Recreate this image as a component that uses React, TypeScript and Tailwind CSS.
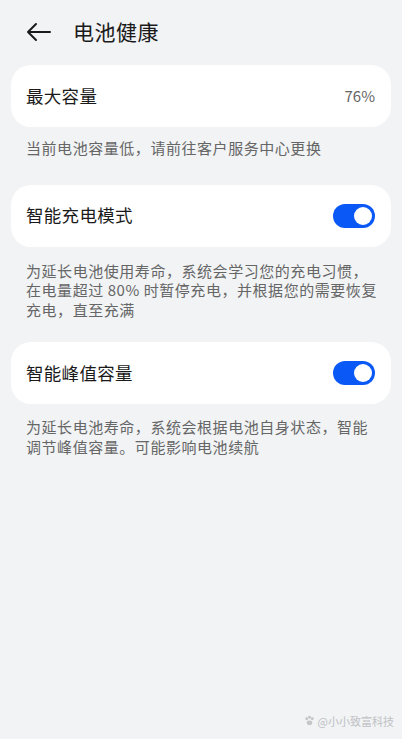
const Toggle = () => (
  <div className="flex h-[24px] w-[42px] items-center justify-end rounded-full bg-[#0a59f7] pr-[3px]">
    <div className="h-[18px] w-[18px] rounded-full bg-white" />
  </div>
);

const Card = ({ title, right }: { title: string; right: React.ReactNode }) => (
  <div className="flex h-[62px] items-center justify-between rounded-[20px] bg-white pl-[15px] pr-[16px]">
    <span className="text-[17.5px] tracking-[0.3px] text-[#1a1a1a]">{title}</span>
    {right}
  </div>
);

const Desc = ({ lines, className }: { lines: string[]; className: string }) => (
  <div className={`px-[15px] text-[15px] tracking-[0.55px] text-[#666] ${className}`}>
    {lines.map((l) => (
      <div key={l} className="whitespace-nowrap">
        {l}
      </div>
    ))}
  </div>
);

const App = () => {
  return (
    <div
      className="relative min-h-[739px] w-full bg-[#f1f3f5]"
      style={{ fontFamily: '"Noto Sans CJK SC", "Noto Sans", sans-serif' }}
    >
      <div className="flex h-[65px] items-center pb-[1px] pl-[26px]">
        <svg width="25" height="20" viewBox="0 0 25 20" fill="none" stroke="#1a1a1a" strokeWidth="2" strokeLinecap="round" strokeLinejoin="round">
          <path d="M24 10H2M10 2L2 10l8 8" />
        </svg>
        <h1 className="ml-[22px] text-[21px] tracking-[0.5px] text-[#1a1a1a]">电池健康</h1>
      </div>

      <div className="px-[11px]">
        <Card title="最大容量" right={<span className="text-[15px] text-[#666]">76%</span>} />
        <Desc className="mt-[11px] leading-[19.5px]" lines={["当前电池容量低，请前往客户服务中心更换"]} />

        <div className="mt-[27px]">
          <Card title="智能充电模式" right={<Toggle />} />
        </div>
        <Desc
          className="mt-[14px] leading-[19.5px]"
          lines={[
            "为延长电池使用寿命，系统会学习您的充电习惯，",
            "在电量超过 80% 时暂停充电，并根据您的需要恢复",
            "充电，直至充满",
          ]}
        />

        <div className="mt-[23px]">
          <Card title="智能峰值容量" right={<Toggle />} />
        </div>
        <Desc
          className="mt-[13px] leading-[20px]"
          lines={["为延长电池寿命，系统会根据电池自身状态，智能", "调节峰值容量。可能影响电池续航"]}
        />
      </div>

      <div className="absolute bottom-[10px] right-[8px] flex items-center gap-[3px] text-[11px] text-[#bfc1c4]">
        <svg width="11" height="11" viewBox="0 0 12 12" fill="#c4c6c9">
          <circle cx="3" cy="4" r="1.6" />
          <circle cx="6" cy="2.5" r="1.6" />
          <circle cx="9" cy="4" r="1.6" />
          <ellipse cx="6" cy="8.5" rx="3" ry="2.5" />
        </svg>
        <span>@小小致富科技</span>
      </div>
    </div>
  );
};

export default App;
